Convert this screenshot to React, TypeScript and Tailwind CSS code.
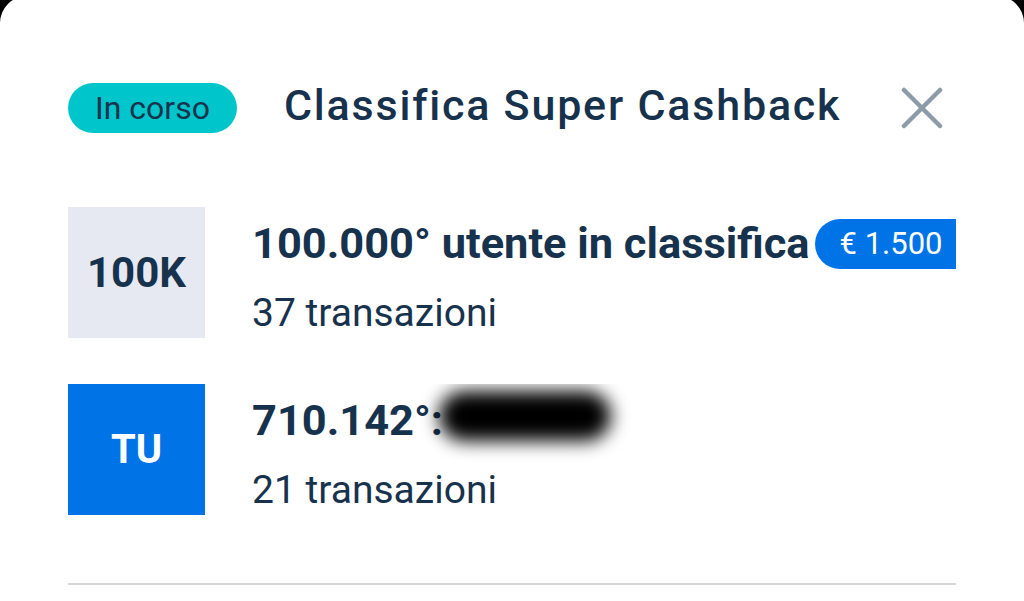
import React from "react";

const font = { fontFamily: "Roboto, 'Noto Sans', sans-serif" };

function RankRow({
  tile,
  tileClass,
  title,
  subtitle,
  extra,
}: {
  tile: string;
  tileClass: string;
  title: string;
  subtitle: string;
  extra?: React.ReactNode;
}) {
  return (
    <div className="flex items-start">
      <div
        className={`w-[137px] h-[131px] flex items-center justify-center shrink-0 font-bold ${tileClass}`}
      >
        {tile}
      </div>
      <div className="ml-[47px] pt-[13px] flex flex-col min-w-0 flex-1 overflow-hidden">
        <div className="flex items-center whitespace-nowrap h-[48px]">
          <span className="text-[43.4px] font-bold text-[#17324d] leading-[48px]">{title}</span>
          {extra}
        </div>
        <div className="mt-[21px] text-[39px] text-[#17324d] leading-[48px]">{subtitle}</div>
      </div>
    </div>
  );
}

export default function App() {
  return (
    <div className="bg-black w-[1024px] h-[601px] overflow-hidden" style={font}>
      <div className="bg-white h-[610px] -mt-[4px] rounded-t-[27px] px-[68px] pt-[87px] flex flex-col">
        <div className="flex items-center h-[50px]">
          <div className="h-[50px] px-[27px] rounded-full bg-[#00c5ca] text-[#17324d] text-[32px] leading-[50px]">
            In corso
          </div>
          <div className="ml-[47px] mb-[6px] text-[43px] leading-[50px] font-medium text-[#17324d] tracking-[1.8px]">
            Classifica Super Cashback
          </div>
          <button className="ml-auto mr-[12px] w-[44px] h-[44px] flex items-center justify-center text-[#8d9aa8]">
            <svg width="42" height="42" viewBox="0 0 42 42" fill="none" stroke="currentColor" strokeWidth="4.5" strokeLinecap="round">
              <path d="M3 3 L39 39 M39 3 L3 39" />
            </svg>
          </button>
        </div>

        <div className="mt-[74px] flex flex-col gap-[46px]">
          <RankRow
            tile="100K"
            tileClass="bg-[#e6e9f2] text-[#17324d] text-[42px]"
            title="100.000° utente in classifica"
            subtitle="37 transazioni"
            extra={
              <span className="ml-[5px] h-[50px] pl-[25px] pr-[26px] rounded-l-full bg-[#0073e6] text-white text-[31px] leading-[50px] shrink-0">
                € 1.500
              </span>
            }
          />
          <RankRow
            tile="TU"
            tileClass="bg-[#0073e6] text-white text-[40px]"
            title="710.142°:"
            subtitle="21 transazioni"
            extra={
              <span className="-ml-[4px] -mt-[10px] inline-block w-[172px] h-[50px] rounded-full bg-black blur-[9px]" />
            }
          />
        </div>

        <div className="mt-[68px] h-[2px] bg-[#d8d8d8]" />
      </div>
    </div>
  );
}
